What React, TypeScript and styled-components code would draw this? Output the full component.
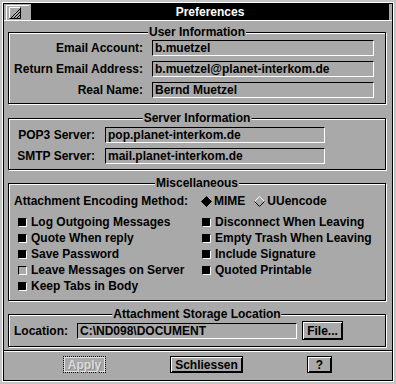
import React from 'react';
import styled, { createGlobalStyle } from 'styled-components';

const PANEL = '#a9a9a9';

const GlobalStyle = createGlobalStyle`
  html, body {
    margin: 0;
    padding: 0;
    background: #c4c4c4;
  }
  * {
    box-sizing: border-box;
  }
`;

const Window = styled.div`
  width: 396px;
  height: 384px;
  border: 2px solid #c4c4c4;
  font-family: 'Liberation Sans', Arial, sans-serif;
  font-weight: bold;
  font-size: 12px;
  color: #000;
`;

const Frame = styled.div`
  height: 100%;
  border: 1px solid #fff;
`;

const Inner = styled.div`
  height: 100%;
  border: 1px solid #000;
  background: ${PANEL};
  display: flex;
  flex-direction: column;
`;

const TitleRow = styled.div`
  display: flex;
  gap: 2px;
  height: 17px;
  padding: 0 3px 0 2px;
  border-bottom: 1px solid #fff;
`;

const CloseBox = styled.div`
  width: 23px;
  height: 15px;
  margin-top: 1px;
  border-top: 1px solid #fff;
  border-left: 1px solid #fff;
  display: flex;
  align-items: center;
  padding-left: 2px;
`;

const TitleBar = styled.div`
  flex: 1;
  height: 16px;
  background: #000;
  color: #fff;
  text-align: center;
  line-height: 16px;
`;

const Body = styled.div`
  display: flex;
  flex-direction: column;
  padding: 0 6px 0 4px;
`;

const Group = styled.div<{ $h: number; $top: number }>`
  position: relative;
  height: ${p => p.$h}px;
  margin-top: ${p => p.$top}px;
  border: 1px solid #000;
  box-shadow: inset 1px 1px 0 #fff, 1px 1px 0 #fff;
`;

const Legend = styled.div`
  position: absolute;
  top: -8px;
  left: 50%;
  transform: translateX(-50%);
  padding: 0 1px;
  background: ${PANEL};
  line-height: 14px;
  white-space: nowrap;
`;

const FieldGrid = styled.div<{ $label: number; $field: number; $gap: number; $top: number }>`
  display: grid;
  grid-template-columns: ${p => p.$label}px ${p => p.$field}px;
  column-gap: ${p => p.$gap}px;
  row-gap: 5px;
  padding-top: ${p => p.$top}px;
  align-items: center;
`;

const Label = styled.div`
  text-align: right;
  line-height: 16px;
  white-space: nowrap;
`;

const Field = styled.div<{ $w?: number }>`
  height: 16px;
  ${p => (p.$w ? `width: ${p.$w}px;` : '')}
  border: 1px solid;
  border-color: #000 #fff #fff #000;
  padding: 0 2px;
  line-height: 14px;
  white-space: nowrap;
  overflow: hidden;
`;

const Misc = styled.div`
  padding: 9px 0 0 5px;
`;

const TwoCols = styled.div<{ $top?: number }>`
  display: grid;
  grid-template-columns: 187px auto;
  margin-top: ${p => p.$top || 0}px;
  line-height: 16px;
`;

const RadioRow = styled.div`
  display: flex;
  align-items: center;
  gap: 9px;
`;

const Radio = styled.span`
  display: flex;
  align-items: center;
  gap: 2px;
`;

const CheckList = styled.div<{ $pad: number }>`
  display: flex;
  flex-direction: column;
  padding-left: ${p => p.$pad}px;
`;

const CheckItem = styled.div`
  display: flex;
  align-items: center;
  gap: 4px;
  height: 16px;
  white-space: nowrap;
`;

const Box = styled.span<{ $on: boolean }>`
  width: 9px;
  height: 9px;
  background: ${p => (p.$on ? '#000' : PANEL)};
  border: 1px solid;
  border-color: #000 #fff #fff #000;
`;

const StorageRow = styled.div`
  display: flex;
  align-items: center;
  height: 100%;
  padding-left: 5px;
`;

const Button = styled.button<{ $w: number; $h: number }>`
  width: ${p => p.$w}px;
  height: ${p => p.$h}px;
  padding: 0;
  background: ${PANEL};
  border: 1px solid #000;
  box-shadow: inset 1px 1px 0 #fff, inset -1px -1px 0 #000;
  font: inherit;
  color: #000;
  line-height: 14px;
`;

const DisabledButton = styled(Button)`
  border: 1px dotted #000;
  box-shadow: inset 0 0 0 1px #e4e4e4;
  color: #dcdcdc;
  text-shadow: 1px 1px 0 #8a8a8a;
`;

const Separator = styled.div`
  margin-top: 3px;
  border-top: 1px solid #000;
  border-bottom: 1px solid #fff;
`;

const ButtonRow = styled.div`
  flex: 1;
  display: flex;
  align-items: flex-start;
  gap: 64px;
  padding: 4px 0 0 59px;
`;

const CloseIcon = () => (
  <svg width="12" height="12" viewBox="0 0 12 12">
    <path d="M0.5 11.5V0.5H11.5" stroke="#fff" fill="none" />
    <path d="M11.5 0.5V11.5H0.5" stroke="#000" fill="none" />
    <path d="M2 11L11 2M5 11L11 5M8 11L11 8" stroke="#000" strokeWidth="1" />
  </svg>
);

const Diamond = ({ on }: { on: boolean }) => (
  <svg width="11" height="11" viewBox="0 0 11 11">
    {on ? (
      <path d="M5.5 0.5L10.5 5.5L5.5 10.5L0.5 5.5Z" fill="#000" stroke="#000" />
    ) : (
      <>
        <path d="M0.5 5.5L5.5 0.5L10.5 5.5" fill="none" stroke="#fff" />
        <path d="M0.5 5.5L5.5 10.5L10.5 5.5" fill="none" stroke="#000" />
      </>
    )}
  </svg>
);

const leftChecks = [
  { label: 'Log Outgoing Messages', on: true },
  { label: 'Quote When reply', on: true },
  { label: 'Save Password', on: true },
  { label: 'Leave Messages on Server', on: false },
  { label: 'Keep Tabs in Body', on: true },
];

const rightChecks = [
  { label: 'Disconnect When Leaving', on: true },
  { label: 'Empty Trash When Leaving', on: true },
  { label: 'Include Signature', on: true },
  { label: 'Quoted Printable', on: true },
];

export default function App() {
  return (
    <>
      <GlobalStyle />
      <Window>
        <Frame>
          <Inner>
            <TitleRow>
              <CloseBox>
                <CloseIcon />
              </CloseBox>
              <TitleBar>Preferences</TitleBar>
            </TitleRow>

            <Body>
              <Group $h={72} $top={11}>
                <Legend>User Information</Legend>
                <FieldGrid $label={134} $field={222} $gap={9} $top={7}>
                  <Label>Email Account:</Label>
                  <Field>b.muetzel</Field>
                  <Label>Return Email Address:</Label>
                  <Field>b.muetzel@planet-interkom.de</Field>
                  <Label>Real Name:</Label>
                  <Field>Bernd Muetzel</Field>
                </FieldGrid>
              </Group>

              <Group $h={52} $top={14}>
                <Legend>Server Information</Legend>
                <FieldGrid $label={86} $field={220} $gap={10} $top={8}>
                  <Label>POP3 Server:</Label>
                  <Field>pop.planet-interkom.de</Field>
                  <Label>SMTP Server:</Label>
                  <Field>mail.planet-interkom.de</Field>
                </FieldGrid>
              </Group>

              <Group $h={118} $top={13}>
                <Legend>Miscellaneous</Legend>
                <Misc>
                  <TwoCols>
                    <span>Attachment Encoding Method:</span>
                    <RadioRow>
                      <Radio>
                        <Diamond on />
                        MIME
                      </Radio>
                      <Radio>
                        <Diamond on={false} />
                        UUencode
                      </Radio>
                    </RadioRow>
                  </TwoCols>
                  <TwoCols $top={5}>
                    <CheckList $pad={4}>
                      {leftChecks.map(c => (
                        <CheckItem key={c.label}>
                          <Box $on={c.on} />
                          {c.label}
                        </CheckItem>
                      ))}
                    </CheckList>
                    <CheckList $pad={1}>
                      {rightChecks.map(c => (
                        <CheckItem key={c.label}>
                          <Box $on={c.on} />
                          {c.label}
                        </CheckItem>
                      ))}
                    </CheckList>
                  </TwoCols>
                </Misc>
              </Group>

              <Group $h={33} $top={13}>
                <Legend>Attachment Storage Location</Legend>
                <StorageRow>
                  <Label style={{ marginRight: 9 }}>Location:</Label>
                  <Field $w={220}>C:\ND098\DOCUMENT</Field>
                  <Button $w={41} $h={19} style={{ marginLeft: 5 }}>
                    File...
                  </Button>
                </StorageRow>
              </Group>
            </Body>

            <Separator />

            <ButtonRow>
              <DisabledButton $w={43} $h={17} disabled>
                Apply
              </DisabledButton>
              <Button $w={73} $h={17}>Schliessen</Button>
              <Button $w={25} $h={17}>?</Button>
            </ButtonRow>
          </Inner>
        </Frame>
      </Window>
    </>
  );
}
